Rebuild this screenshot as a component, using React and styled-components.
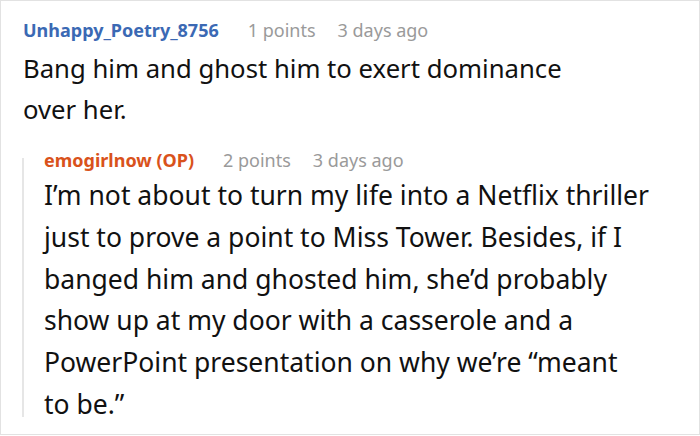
import React from "react";
import styled, { createGlobalStyle } from "styled-components";

const GlobalStyle = createGlobalStyle`
  html, body {
    margin: 0;
    padding: 0;
    background: #fff;
  }
  body {
    font-family: "Noto Sans", "Open Sans", sans-serif;
  }
`;

const Frame = styled.div`
  box-sizing: border-box;
  width: 700px;
  height: 435px;
  border: 1px solid #e2e2e2;
  padding: 17px 0 0 22px;
  overflow: hidden;
`;

const Comment = styled.div`
  display: flex;
  flex-direction: column;
  margin-top: ${(p) => p.offset || 0}px;
`;

const Meta = styled.div`
  display: flex;
  align-items: baseline;
  gap: 22px;
  font-size: 18px;
  line-height: 24px;
  white-space: nowrap;
`;

const Author = styled.span`
  font-weight: 700;
  color: ${(p) => (p.$op ? "#d9521b" : "#3b69b4")};
  margin-right: 7px;
`;

const Info = styled.span`
  color: #9a9a9a;
`;

const Body = styled.p`
  margin: ${(p) => p.$mt}px 0 0;
  font-size: ${(p) => p.$fs}px;
  line-height: ${(p) => p.$lh}px;
  color: #111;
  white-space: nowrap;
`;

const Replies = styled.div`
  margin-top: 28px;
  margin-left: -1px;
  border-left: 2px solid #e6e6e6;
  padding-left: 20px;
  height: 259px;
`;

export default function App() {
  return (
    <>
      <GlobalStyle />
      <Frame>
        <Comment>
          <Meta>
            <Author>Unhappy_Poetry_8756</Author>
            <Info>1 points</Info>
            <Info>3 days ago</Info>
          </Meta>
          <Body $mt={6} $fs={25.7} $lh={41}>
            Bang him and ghost him to exert dominance
            <br />
            over her.
          </Body>
          <Replies>
            <Comment offset={-10}>
              <Meta>
                <Author $op>emogirlnow (OP)</Author>
                <Info>2 points</Info>
                <Info>3 days ago</Info>
              </Meta>
              <Body $mt={3} $fs={26.5} $lh={41.8}>
                I’m not about to turn my life into a Netflix thriller
                <br />
                just to prove a point to Miss Tower. Besides, if I
                <br />
                banged him and ghosted him, she’d probably
                <br />
                show up at my door with a casserole and a
                <br />
                PowerPoint presentation on why we’re “meant
                <br />
                to be.”
              </Body>
            </Comment>
          </Replies>
        </Comment>
      </Frame>
    </>
  );
}
